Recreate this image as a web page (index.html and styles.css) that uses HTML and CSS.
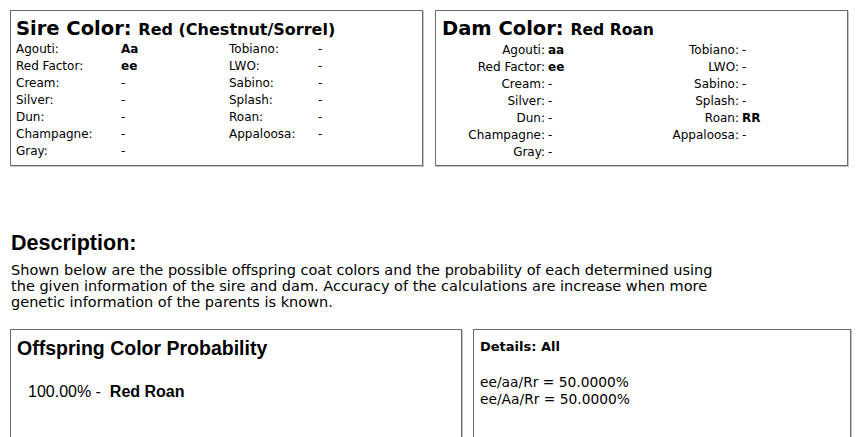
FILE: index.html
```html
<!DOCTYPE html>
<html lang="en">
<head>
<meta charset="utf-8">
<title>Horse Color Calculator</title>
<link rel="stylesheet" href="styles.css">
</head>
<body>
<div class="parents">
  <section class="parent sire">
    <h2 class="parent-title">Sire Color: <span class="color-name">Red (Chestnut/Sorrel)</span></h2>
    <div class="genes">
      <span class="lbl">Agouti:</span><span class="val"><b>Aa</b></span><span class="lbl">Tobiano:</span><span class="val">-</span>
      <span class="lbl">Red Factor:</span><span class="val"><b>ee</b></span><span class="lbl">LWO:</span><span class="val">-</span>
      <span class="lbl">Cream:</span><span class="val">-</span><span class="lbl">Sabino:</span><span class="val">-</span>
      <span class="lbl">Silver:</span><span class="val">-</span><span class="lbl">Splash:</span><span class="val">-</span>
      <span class="lbl">Dun:</span><span class="val">-</span><span class="lbl">Roan:</span><span class="val">-</span>
      <span class="lbl">Champagne:</span><span class="val">-</span><span class="lbl">Appaloosa:</span><span class="val">-</span>
      <span class="lbl">Gray:</span><span class="val">-</span>
    </div>
  </section>
  <section class="parent dam">
    <h2 class="parent-title">Dam Color: <span class="color-name">Red Roan</span></h2>
    <div class="genes">
      <span class="lbl">Agouti:</span><span class="val"><b>aa</b></span><span class="lbl">Tobiano:</span><span class="val">-</span>
      <span class="lbl">Red Factor:</span><span class="val"><b>ee</b></span><span class="lbl">LWO:</span><span class="val">-</span>
      <span class="lbl">Cream:</span><span class="val">-</span><span class="lbl">Sabino:</span><span class="val">-</span>
      <span class="lbl">Silver:</span><span class="val">-</span><span class="lbl">Splash:</span><span class="val">-</span>
      <span class="lbl">Dun:</span><span class="val">-</span><span class="lbl">Roan:</span><span class="val"><b>RR</b></span>
      <span class="lbl">Champagne:</span><span class="val">-</span><span class="lbl">Appaloosa:</span><span class="val">-</span>
      <span class="lbl">Gray:</span><span class="val">-</span>
    </div>
  </section>
</div>

<h2 class="desc-title">Description:</h2>
<p class="desc">Shown below are the possible offspring coat colors and the probability of each determined using the given information of the sire and dam. Accuracy of the calculations are increase when more genetic information of the parents is known.</p>

<div class="results">
  <section class="result probability">
    <h3 class="prob-title">Offspring Color Probability</h3>
    <div class="prob-item">100.00% -&nbsp; <b>Red Roan</b></div>
  </section>
  <section class="result details">
    <h4 class="details-title">Details: All</h4>
    <div class="details-line">ee/aa/Rr = 50.0000%</div>
    <div class="details-line">ee/Aa/Rr = 50.0000%</div>
  </section>
</div>
</body>
</html>
```

FILE: styles.css
```css
html, body {
  margin: 0;
  padding: 0;
  background: #ffffff;
  color: #000000;
}

body {
  padding: 10px 0 0 10px;
  font-family: "DejaVu Sans", Verdana, sans-serif;
  font-size: 12px;
}

.parents {
  display: flex;
  gap: 12px;
}

.parent {
  width: 413px;
  box-sizing: border-box;
  border: 1px solid #6a6a6a;
  box-shadow: 1px 1px 0 #c4c4c4;
  padding: 6px 6px 4px 5px;
}

.dam {
  padding-left: 6px;
}

.parent-title {
  margin: 0;
  font-size: 19.5px;
  line-height: 23px;
  font-weight: bold;
}

.color-name {
  font-size: 16px;
}

.dam .color-name {
  font-size: 15.6px;
}

.genes {
  display: grid;
  line-height: 17px;
}

.sire .genes {
  grid-template-columns: 105px 108px 89px auto;
}

.dam .genes {
  grid-template-columns: 103px 90px 104px auto;
}

.dam .lbl {
  text-align: right;
}

.dam .val {
  padding-left: 3px;
}

.desc-title {
  margin: 65px 0 0 1px;
  font-family: "Liberation Sans", Arial, sans-serif;
  font-size: 21.5px;
  line-height: 24px;
  font-weight: bold;
}

.desc {
  margin: 7px 0 0 1px;
  width: 725px;
  font-size: 14.5px;
  line-height: 16px;
}

.results {
  display: flex;
  gap: 11px;
  margin-top: 19px;
}

.result {
  box-sizing: border-box;
  border: 1px solid #6a6a6a;
  box-shadow: 1px 1px 0 #c4c4c4;
  min-height: 130px;
}

.probability {
  width: 452px;
  padding: 6px 6px 0 6px;
}

.details {
  width: 378px;
  padding: 8px 6px 0 6px;
}

.prob-title {
  margin: 0;
  font-family: "Liberation Sans", Arial, sans-serif;
  font-size: 19.5px;
  line-height: 24px;
  font-weight: bold;
}

.prob-item {
  margin: 22px 0 0 11px;
  font-family: "Liberation Sans", Arial, sans-serif;
  font-size: 16px;
  line-height: 20px;
}

.details-title {
  margin: 0 0 19px 0;
  font-size: 13px;
  line-height: 17px;
  font-weight: bold;
}

.details-line {
  font-size: 13.8px;
  line-height: 17px;
}
```
